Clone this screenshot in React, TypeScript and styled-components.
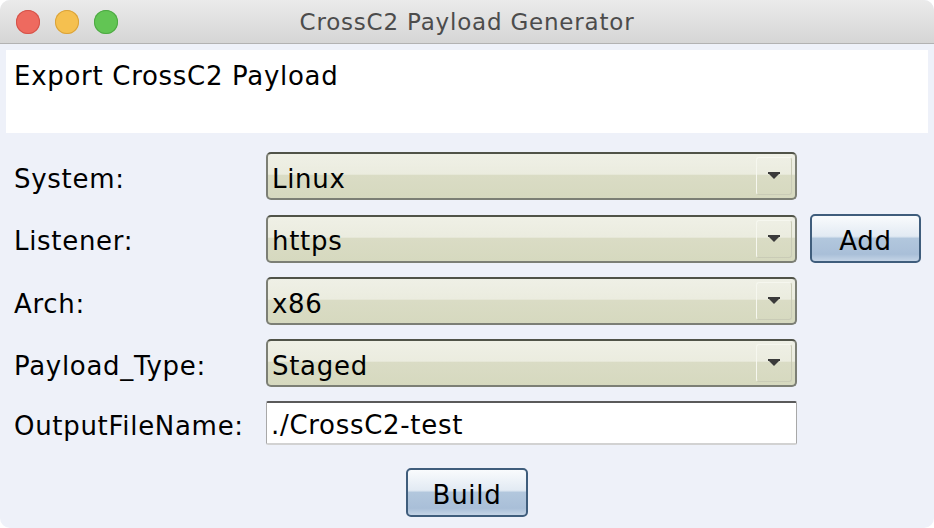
import React from "react";
import styled, { createGlobalStyle } from "styled-components";

const GlobalStyle = createGlobalStyle`
  body {
    margin: 0;
    background: #ffffff;
  }
`;

const Window = styled.div`
  width: 934px;
  height: 528px;
  background: #eef1f9;
  border-radius: 10px;
  overflow: hidden;
  display: flex;
  flex-direction: column;
  font-family: "DejaVu Sans", "Liberation Sans", sans-serif;
  letter-spacing: 0.7px;
  color: #000;
`;

const TitleBar = styled.div`
  height: 43px;
  flex: none;
  display: grid;
  grid-template-columns: 1fr auto 1fr;
  align-items: center;
  background: linear-gradient(to bottom, #ebebeb, #d5d5d5);
  border-bottom: 1px solid #b2b2b2;
`;

const Lights = styled.div`
  display: flex;
  gap: 15px;
  padding-left: 16px;
`;

const Light = styled.span<{ $fill: string; $edge: string }>`
  width: 24px;
  height: 24px;
  border-radius: 50%;
  background: ${(p) => p.$fill};
  box-shadow: inset 0 0 0 1px ${(p) => p.$edge};
`;

const Title = styled.div`
  font-size: 23px;
  letter-spacing: 0.8px;
  color: #4c4c4c;
`;

const Content = styled.div`
  flex: 1;
  display: flex;
  flex-direction: column;
  padding: 6px 6px 0 6px;
`;

const Banner = styled.div`
  height: 83px;
  background: #ffffff;
  padding: 11px 8px 0;
  box-sizing: border-box;
  font-size: 26px;
`;

const Form = styled.div`
  display: grid;
  grid-template-columns: 239px 531px 111px;
  column-gap: 13px;
  row-gap: 14px;
  padding: 19px 0 0 8px;
  align-items: center;
`;

const Label = styled.div`
  font-size: 26px;
  grid-column: 1;
  padding-top: 5px;
`;

const Combo = styled.div`
  grid-column: 2;
  height: 48px;
  box-sizing: border-box;
  display: flex;
  align-items: center;
  border: 2px solid #7c7f75;
  border-top-color: #505348;
  border-radius: 5px;
  background: linear-gradient(
    to bottom,
    #eff0e6 0%,
    #ebecdf 46%,
    #dadcc5 48%,
    #d6d9bf 100%
  );
  font-size: 26px;
`;

const ComboValue = styled.span`
  flex: 1;
  padding: 5px 0 0 4px;
`;

const ArrowBox = styled.span`
  width: 36px;
  height: 38px;
  margin-right: 3px;
  box-sizing: border-box;
  border: 1px solid #f6f7ef;
  border-right-color: #c9cbb6;
  border-bottom-color: #c9cbb6;
  border-radius: 3px;
  display: flex;
  align-items: center;
  justify-content: center;
`;

const TextField = styled.div`
  grid-column: 2;
  height: 44px;
  box-sizing: border-box;
  background: #ffffff;
  border: 1px solid #a8a8a8;
  border-top: 2px solid #5a5a5a;
  border-bottom: 2px solid #d2d2d2;
  border-radius: 2px;
  font-size: 26px;
  display: flex;
  align-items: center;
  padding: 4px 0 0 4px;
`;

const Button = styled.button<{ $width: number }>`
  width: ${(p) => p.$width}px;
  height: 49px;
  box-sizing: border-box;
  border: 2px solid #3f5d7c;
  border-radius: 5px;
  background: linear-gradient(
    to bottom,
    #f9fbfd 0%,
    #e2eaf3 45%,
    #b2c7dd 50%,
    #a9bfd8 85%,
    #c4d4e6 100%
  );
  font-family: "DejaVu Sans", "Liberation Sans", sans-serif;
  font-size: 26px;
  letter-spacing: 0.7px;
  color: #000;
  padding: 4px 0 0;
`;

const Footer = styled.div`
  display: flex;
  justify-content: center;
  padding-top: 23px;
`;

function Arrow() {
  return (
    <svg width="14" height="8" viewBox="0 0 14 8">
      <rect x="1" y="0" width="12" height="2" fill="#3a3a3a" />
      <polygon points="2,2 12,2 7,7" fill="#3a3a3a" />
    </svg>
  );
}

function Select(props: { value: string }) {
  return (
    <Combo>
      <ComboValue>{props.value}</ComboValue>
      <ArrowBox>
        <Arrow />
      </ArrowBox>
    </Combo>
  );
}

export default function App() {
  return (
    <>
      <GlobalStyle />
      <Window>
        <TitleBar>
          <Lights>
            <Light $fill="#ee6a5f" $edge="#d4534a" />
            <Light $fill="#f5c04f" $edge="#d9a23a" />
            <Light $fill="#62c554" $edge="#4ea844" />
          </Lights>
          <Title>CrossC2 Payload Generator</Title>
          <div />
        </TitleBar>
        <Content>
          <Banner>Export CrossC2 Payload</Banner>
          <Form>
            <Label>System:</Label>
            <Select value="Linux" />
            <div />
            <Label>Listener:</Label>
            <Select value="https" />
            <Button $width={111}>Add</Button>
            <Label>Arch:</Label>
            <Select value="x86" />
            <div />
            <Label>Payload_Type:</Label>
            <Select value="Staged" />
            <div />
            <Label>OutputFileName:</Label>
            <TextField>./CrossC2-test</TextField>
            <div />
          </Form>
          <Footer>
            <Button $width={122}>Build</Button>
          </Footer>
        </Content>
      </Window>
    </>
  );
}
